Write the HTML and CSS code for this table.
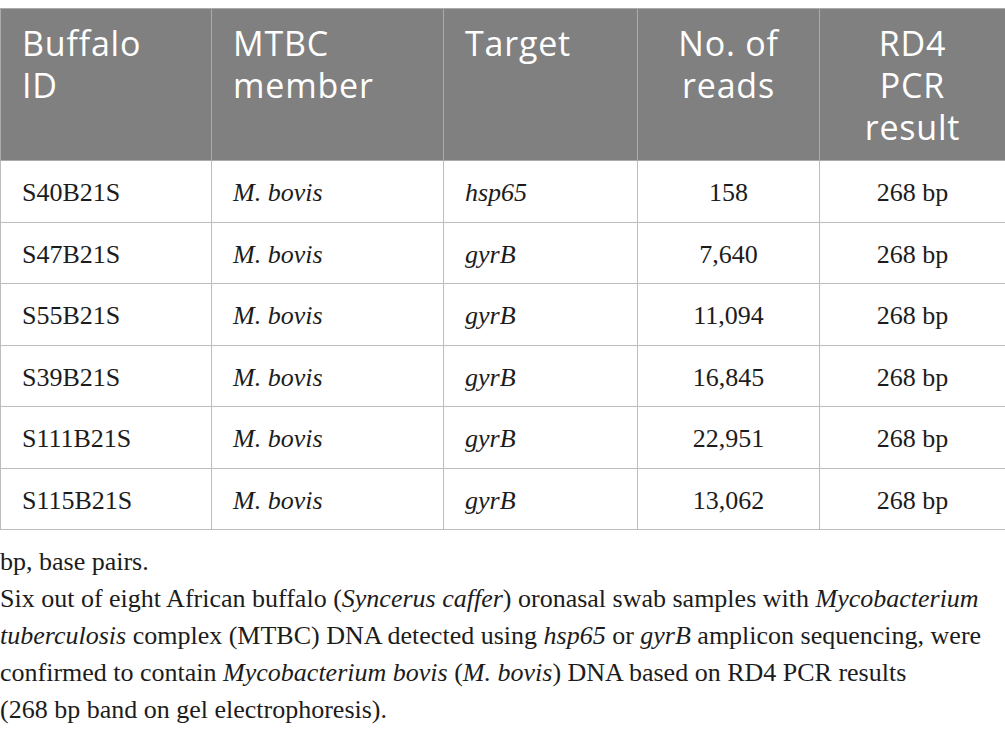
FILE: index.html
```html
<!DOCTYPE html>
<html lang="en">
<head>
<meta charset="utf-8">
<title>Table</title>
<link rel="stylesheet" href="styles.css">
</head>
<body>
<table class="data">
  <colgroup>
    <col class="c1"><col class="c2"><col class="c3"><col class="c4"><col class="c5">
  </colgroup>
  <thead>
    <tr>
      <th>Buffalo<br>ID</th>
      <th>MTBC<br>member</th>
      <th>Target</th>
      <th class="ctr">No. of<br>reads</th>
      <th class="ctr">RD4<br>PCR<br>result</th>
    </tr>
  </thead>
  <tbody>
    <tr><td>S40B21S</td><td><i>M. bovis</i></td><td><i>hsp65</i></td><td class="ctr">158</td><td class="ctr">268 bp</td></tr>
    <tr><td>S47B21S</td><td><i>M. bovis</i></td><td><i>gyrB</i></td><td class="ctr">7,640</td><td class="ctr">268 bp</td></tr>
    <tr><td>S55B21S</td><td><i>M. bovis</i></td><td><i>gyrB</i></td><td class="ctr">11,094</td><td class="ctr">268 bp</td></tr>
    <tr><td>S39B21S</td><td><i>M. bovis</i></td><td><i>gyrB</i></td><td class="ctr">16,845</td><td class="ctr">268 bp</td></tr>
    <tr><td>S111B21S</td><td><i>M. bovis</i></td><td><i>gyrB</i></td><td class="ctr">22,951</td><td class="ctr">268 bp</td></tr>
    <tr><td>S115B21S</td><td><i>M. bovis</i></td><td><i>gyrB</i></td><td class="ctr">13,062</td><td class="ctr">268 bp</td></tr>
  </tbody>
</table>
<div class="notes">
  <p class="note">bp, base pairs.</p>
  <p class="note">Six out of eight African buffalo (<i>Syncerus caffer</i>) oronasal swab samples with <i>Mycobacterium</i><br><i>tuberculosis</i> complex (MTBC) DNA detected using <i>hsp65</i> or <i>gyrB</i> amplicon sequencing, were<br>confirmed to contain <i>Mycobacterium bovis</i> (<i>M. bovis</i>) DNA based on RD4 PCR results<br>(268 bp band on gel electrophoresis).</p>
</div>
</body>
</html>
```

FILE: styles.css
```css
html, body {
  background: #ffffff;
}
body {
  margin: 8px 0 0 0;
  color: #1c1c1c;
  font-family: "Liberation Serif", "Times New Roman", serif;
}
.data {
  border-collapse: collapse;
  width: 1005px;
  table-layout: fixed;
}
.c1 { width: 211px; }
.c2 { width: 232px; }
.c3 { width: 194px; }
.c4 { width: 182px; }
.c5 { width: 186px; }
.data th {
  background: #808080;
  color: #ffffff;
  font-family: "Open Sans", "Noto Sans", sans-serif;
  font-weight: 400;
  font-size: 34px;
  letter-spacing: 0.8px;
  line-height: 42px;
  text-align: left;
  vertical-align: top;
  padding: 13px 10px 12px 21px;
  border: 1px solid #ababab;
}
.data td {
  font-size: 26px;
  line-height: 30px;
  padding: 17px 20px 13.5px 21px;
  border: 1px solid #bdbdbd;
  vertical-align: middle;
}
.data .ctr {
  text-align: center;
  padding-left: 10px;
  padding-right: 10px;
}
.notes {
  margin-top: 13px;
}
.note {
  margin: 0;
  font-size: 26px;
  line-height: 37px;
  white-space: nowrap;
}
```
